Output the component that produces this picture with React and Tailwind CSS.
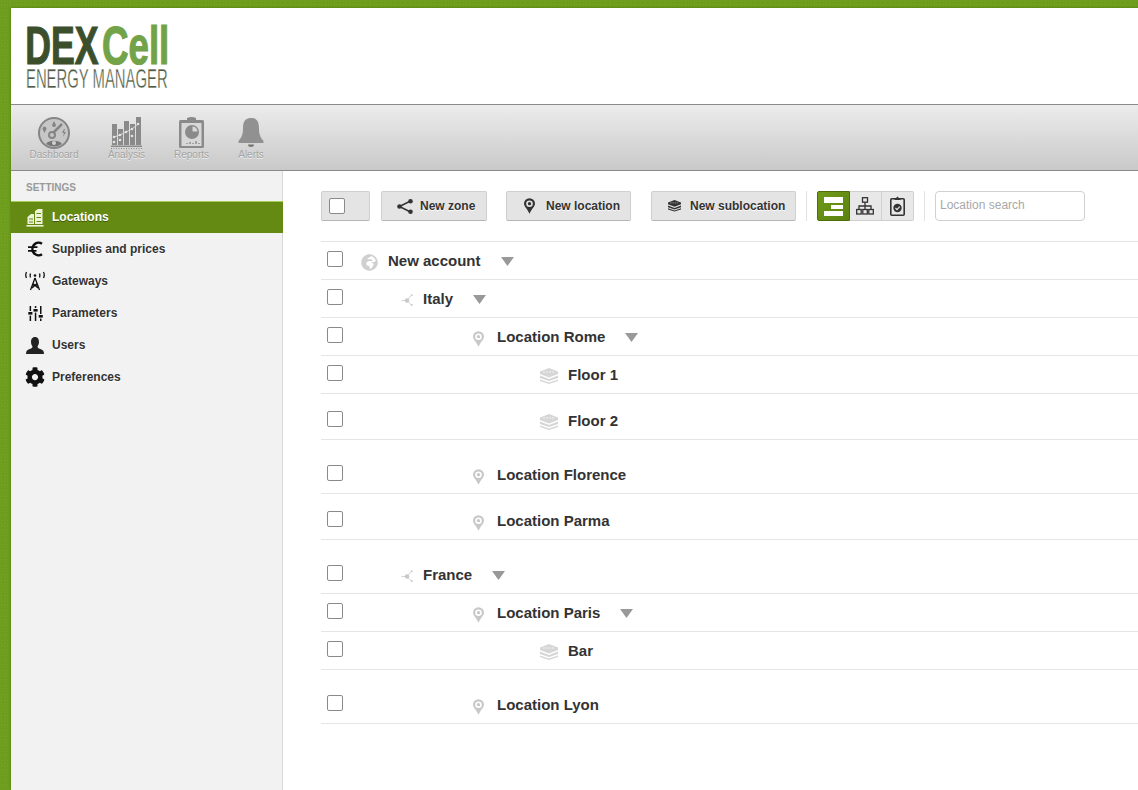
import React from 'react';
import { FaCog, FaGlobeAfrica } from 'react-icons/fa';

const DashboardIcon = () => (
  <svg width="34" height="34" viewBox="0 0 34 34" fill="none">
    <circle cx="17" cy="17" r="15" stroke="#858585" strokeWidth="2" fill="#c6c6c6" />
    <path d="M25 8 L16 17" stroke="#858585" strokeWidth="2.5" />
    <circle cx="15" cy="19" r="3" stroke="#858585" strokeWidth="2" />
    <path d="M17 5 l-2 4 a2 2 0 0 0 4 0z" fill="#858585" />
    <path d="M6 14 a2 2 0 1 1 3 0 l-1.5 3z" fill="#858585" />
    <path d="M27 13 l-2 4 h2 l-1 4 3-5 h-2 l1-3z" fill="#858585" />
    <path d="M9 28 a9 6 0 0 1 16 0 a15 15 0 0 1-16 0z" fill="#777" />
    <circle cx="17" cy="27" r="2" fill="#d0d0d0" />
  </svg>
);

const AnalysisIcon = () => (
  <svg width="32" height="34" viewBox="0 0 32 34">
    <g fill="#8a8a8a">
      <rect x="1" y="8" width="5" height="21" />
      <rect x="7" y="13" width="5" height="16" />
      <rect x="13" y="5" width="5" height="24" />
      <rect x="19" y="8" width="5" height="21" />
      <rect x="25" y="1" width="5" height="28" />
      <rect x="0" y="29.5" width="31" height="1.5" />
    </g>
    <path d="M3 21 L9 19 L15 16 L21 13 L27 8" stroke="#d8d8d8" strokeWidth="1" fill="none" />
    <g fill="#e4e4e4">
      <circle cx="3" cy="21" r="1.3" />
      <circle cx="9" cy="19" r="1.3" />
      <circle cx="15" cy="16" r="1.3" />
      <circle cx="21" cy="13" r="1.3" />
      <circle cx="27" cy="8" r="1.3" />
      <circle cx="3" cy="26" r="1.3" />
      <circle cx="9" cy="24" r="1.3" />
      <circle cx="21" cy="20" r="1.3" />
    </g>
    <path d="M0 32.5 H31" stroke="#8a8a8a" strokeDasharray="1 1.5" />
  </svg>
);

const ReportsIcon = () => (
  <svg width="27" height="32" viewBox="0 0 27 32">
    <rect x="1" y="3" width="25" height="28" rx="1.5" fill="#8a8a8a" />
    <rect x="3.5" y="6" width="20" height="23" fill="#d8d8d8" />
    <path d="M9 1 Q13.5 -1 18 1 V3 h3 v2 H6 V3 h3z" fill="#8a8a8a" />
    <circle cx="14" cy="15" r="7" fill="#8a8a8a" />
    <path d="M14.5 9.5 v5 h5 a5.5 5.5 0 0 0-5-5z" fill="#d8d8d8" />
    <path d="M9 27 v-1 M12 27 v-2 M15 27 v-1 M18 27 v-3 M21 27 v-1" stroke="#8a8a8a" strokeWidth="1.4" />
  </svg>
);

const BellIcon = () => (
  <svg width="26" height="32" viewBox="0 0 26 32">
    <path
      d="M13 1 C20 1 21 6 21 12 C21 18 23 21 25.5 24 V26 H0.5 V24 C3 21 5 18 5 12 C5 6 6 1 13 1z"
      fill="#919191"
    />
    <path d="M10 27.5 h6 a3 2.5 0 0 1-6 0z" fill="#777" />
  </svg>
);

const BuildingsIcon = () => (
  <svg width="18" height="19" viewBox="0 0 18 19" fill="#eef3d8">
    <path d="M9 3 L12 1 H16.5 V16 H9z" />
    <path d="M1.5 9 L5 6 H8 V16 H1.5z" />
    <rect x="0.5" y="17" width="17" height="1.6" />
    <g fill="#648a13">
      <rect x="10.5" y="5" width="4.5" height="1" />
      <rect x="10.5" y="9" width="4.5" height="1" />
      <rect x="10.5" y="13" width="4.5" height="1" />
      <rect x="3" y="10.5" width="4" height="1" />
      <rect x="3" y="13.5" width="4" height="1" />
    </g>
  </svg>
);

const EuroIcon = () => (
  <svg width="16" height="16" viewBox="0 0 16 16" fill="none" stroke="#111" strokeWidth="2.5">
    <path d="M15 2.8 A6.2 6.2 0 1 0 15 13.2" />
    <path d="M1 6.2 H10.5 M1 9.8 H9.5" strokeWidth="1.7" />
  </svg>
);

const TowerIcon = () => (
  <svg width="20" height="20" viewBox="0 0 20 20" fill="none" stroke="#111" strokeWidth="1.3">
    <path d="M10 7 L5.5 19 M10 7 L14.5 19 M7.5 14 H12.5 M7 17 L12 12.5 M13 17 L8 12.5" />
    <circle cx="10" cy="4.5" r="1.3" fill="#111" stroke="none" />
    <path d="M1.5 1 Q0 4 1.5 7 M18.5 1 Q20 4 18.5 7 M5.5 2.5 Q4.8 4.5 5.5 6.5 M14.5 2.5 Q15.2 4.5 14.5 6.5" />
  </svg>
);

const SlidersIcon = () => (
  <svg width="15" height="15" viewBox="0 0 15 15" fill="#111">
    <rect x="1.6" y="0" width="1.5" height="5" />
    <rect x="0.3" y="6" width="4.1" height="2.6" />
    <rect x="1.6" y="9.6" width="1.5" height="5.4" />
    <rect x="6.8" y="0" width="1.5" height="2" />
    <rect x="5.5" y="3" width="4.1" height="2.6" />
    <rect x="6.8" y="6.6" width="1.5" height="8.4" />
    <rect x="12" y="0" width="1.5" height="8" />
    <rect x="10.7" y="9" width="4.1" height="2.6" />
    <rect x="12" y="12.6" width="1.5" height="2.4" />
  </svg>
);

const UserIcon = () => (
  <svg width="18" height="17" viewBox="0 0 18 17" fill="#222">
    <path d="M9 0 C12 0 13 2.5 13 5 C13 7 12 8.5 11.5 9.5 C11.5 11 13 11.5 15 12.2 C17 13 18 14 18 17 H0 C0 14 1 13 3 12.2 C5 11.5 6.5 11 6.5 9.5 C6 8.5 5 7 5 5 C5 2.5 6 0 9 0z" />
  </svg>
);

const PinIcon = ({ color = '#c8c8c8', hole = '#fff' }) => (
  <svg width="11" height="16" viewBox="0 0 12 17">
    <path d="M6 0 A6 6 0 0 1 12 6 C12 9 8 12 6 17 C4 12 0 9 0 6 A6 6 0 0 1 6 0z" fill={color} />
    <circle cx="6" cy="6" r="3.6" fill={hole} />
    <circle cx="6" cy="6" r="1.8" fill={color} />
  </svg>
);

const LayersIcon = ({ color = '#d6d6d6', gap = '#fff', size = 18 }) => (
  <svg width={size} height={(size * 16) / 18} viewBox="0 0 18 16">
    <path d="M9 0 L18 3.5 V6 L9 9.5 L0 6 V3.5z" fill={color} />
    <path d="M0 7.5 L9 11 L18 7.5 V10 L9 13 L0 10z" fill={color} />
    <path d="M0 11.5 L9 14.5 L18 11.5 V13 L9 16 L0 13z" fill={color} />
    <path d="M3 4 H15" stroke={gap} strokeWidth="0.7" strokeDasharray="2 1" />
  </svg>
);

// three nodes, the left one pulled out, as in the zone icon
const ZoneIcon = () => (
  <svg width="12" height="12" viewBox="0 0 12 12" fill="#c8c8c8" stroke="#c8c8c8">
    <path d="M0.5 6.5 H6 L10.8 1 M6 6.5 L10.8 11.5" strokeWidth="0.8" fill="none" />
    <circle cx="6" cy="6.5" r="2.2" stroke="none" />
    <circle cx="10.8" cy="1.2" r="0.9" stroke="none" />
    <circle cx="10.8" cy="11" r="0.9" stroke="none" />
  </svg>
);

const ShareIcon = () => (
  <svg width="16" height="15" viewBox="0 0 16 15" fill="#333" stroke="#333">
    <path d="M2.5 7.5 L13.5 2 M2.5 7.5 L13.5 13" strokeWidth="1.4" fill="none" />
    <circle cx="2.5" cy="7.5" r="2.3" stroke="none" />
    <circle cx="13.5" cy="2.3" r="2.3" stroke="none" />
    <circle cx="13.5" cy="12.7" r="2.3" stroke="none" />
  </svg>
);

const SitemapIcon = () => (
  <svg width="18" height="18" viewBox="0 0 18 18" fill="none" stroke="#333" strokeWidth="1.3">
    <rect x="6.5" y="0.7" width="5" height="4.5" />
    <rect x="0.7" y="12.5" width="4.5" height="4.5" />
    <rect x="6.8" y="12.5" width="4.5" height="4.5" />
    <rect x="12.8" y="12.5" width="4.5" height="4.5" />
    <path d="M9 5 V12.5 M3 12.5 V9 H15 V12.5" />
  </svg>
);

const ClipboardCheckIcon = () => (
  <svg width="15" height="20" viewBox="0 0 15 20">
    <rect x="0.8" y="2.8" width="13.4" height="16.4" rx="1" fill="none" stroke="#333" strokeWidth="1.6" />
    <path d="M4.5 4 V2 H6 L7.5 0.5 L9 2 H10.5 V4z" fill="#333" />
    <circle cx="7.5" cy="12" r="4.2" fill="#333" />
    <path d="M5.5 12 L7 13.6 L9.7 10.6" stroke="#e8e8e8" strokeWidth="1.2" fill="none" />
  </svg>
);

const Caret = () => (
  <svg width="13" height="9" viewBox="0 0 13 9" className="ml-5 shrink-0">
    <path d="M0 0 H13 L6.5 9z" fill="#999" />
  </svg>
);

const Checkbox = () => (
  <span className="block w-4 h-4 shrink-0 rounded-[2px] border border-[#8a8a8a] bg-white" />
);

const topItems = [
  { label: 'Dashboard', icon: <DashboardIcon />, width: 'w-[48px]', gap: '' },
  { label: 'Analysis', icon: <AnalysisIcon />, width: 'w-[37px]', gap: 'ml-[30px]' },
  { label: 'Reports', icon: <ReportsIcon />, width: 'w-[35px]', gap: 'ml-[29px]' },
  { label: 'Alerts', icon: <BellIcon />, width: 'w-[26px]', gap: 'ml-[29px]' },
];

const navItems = [
  { label: 'Locations', icon: <BuildingsIcon />, active: true },
  { label: 'Supplies and prices', icon: <EuroIcon /> },
  { label: 'Gateways', icon: <TowerIcon /> },
  { label: 'Parameters', icon: <SlidersIcon /> },
  { label: 'Users', icon: <UserIcon /> },
  { label: 'Preferences', icon: <FaCog className="text-[#111] text-[20px]" /> },
];

const levels = [
  { box: 'ml-[16px]', text: 'ml-[9px]', icon: <FaGlobeAfrica className="text-[#cfcfcf] text-[17px] mt-[3px]" /> },
  { box: 'ml-[54px]', text: 'ml-[6px]', icon: <div className="mt-[5px]"><ZoneIcon /></div> },
  { box: 'ml-[125px]', text: 'ml-[9px]', icon: <div className="mt-[4px] ml-[1px]"><PinIcon /></div> },
  { box: 'ml-[196px]', text: 'ml-[9px]', icon: <div className="mt-[3px]"><LayersIcon /></div> },
];

const rows = [
  { label: 'New account', level: 0, caret: true, height: 'h-[38px]', top: 'pt-[9px]' },
  { label: 'Italy', level: 1, caret: true, height: 'h-[38px]', top: 'pt-[9px]' },
  { label: 'Location Rome', level: 2, caret: true, height: 'h-[38px]', top: 'pt-[9px]' },
  { label: 'Floor 1', level: 3, height: 'h-[38px]', top: 'pt-[9px]' },
  { label: 'Floor 2', level: 3, height: 'h-[46px]', top: 'pt-[17px]' },
  { label: 'Location Florence', level: 2, height: 'h-[54px]', top: 'pt-[25px]' },
  { label: 'Location Parma', level: 2, height: 'h-[46px]', top: 'pt-[17px]' },
  { label: 'France', level: 1, caret: true, height: 'h-[54px]', top: 'pt-[25px]' },
  { label: 'Location Paris', level: 2, caret: true, height: 'h-[38px]', top: 'pt-[9px]' },
  { label: 'Bar', level: 3, height: 'h-[38px]', top: 'pt-[9px]' },
  { label: 'Location Lyon', level: 2, height: 'h-[54px]', top: 'pt-[25px]' },
];

const btn =
  'h-[30px] flex items-center rounded-[2px] border border-[#cfcfcf] border-b-[#b5b5b5] bg-[#e4e4e4] text-[12px] font-bold text-[#333] [text-shadow:0_1px_0_#fff]';

const App = () => {
  return (
    <div className="h-screen overflow-hidden bg-[#6f9e1f] bg-[radial-gradient(#74a323_1px,transparent_1px),radial-gradient(#6a991c_1px,transparent_1px)] bg-[length:3px_3px,5px_5px] pt-2 pl-[11px] font-['Liberation_Sans',Arial,sans-serif]">
      <div className="h-full flex flex-col bg-white shadow-[0_0_2px_#47690c]">
        <header className="h-[96px] shrink-0 pl-[15px] pt-[16px] bg-white">
          <svg width="142" height="70" viewBox="0 0 142 70">
            <g transform="scale(0.66 1)">
              <text x="-1" y="39.5" fontFamily="Liberation Sans" fontWeight="700" fontSize="54" fill="#3c4f2c" stroke="#3c4f2c" strokeWidth="1.2">DEX</text>
            </g>
            <g transform="translate(76 0) scale(0.68 1)">
              <text x="0" y="39.5" fontFamily="Liberation Sans" fontWeight="700" fontSize="54" fill="#72a348" stroke="#72a348" strokeWidth="1.2">Cell</text>
            </g>
            <g transform="scale(0.6 1)">
              <text x="0" y="64" fontFamily="Liberation Sans" fontSize="27" fill="#4f5b45" stroke="#fff" strokeWidth="0.4" textLength="236" lengthAdjust="spacingAndGlyphs">ENERGY MANAGER</text>
            </g>
          </svg>
        </header>

        <nav className="h-[67px] shrink-0 flex pl-[19px] pt-[11px] border-y border-[#8a8a8a] bg-gradient-to-b from-[#ececec] to-[#c9c9c9]">
          {topItems.map((item) => (
            <div key={item.label} className={`${item.gap} ${item.width} flex flex-col items-center`}>
              <div className="h-[33px] flex items-center justify-center">{item.icon}</div>
              <span className="text-[10px] leading-[12px] whitespace-nowrap text-[#a3a3a3] [text-shadow:0_1px_0_#eee]">
                {item.label}
              </span>
            </div>
          ))}
        </nav>

        <div className="flex-1 flex min-h-0">
          <aside className="w-[272px] shrink-0 bg-[#f2f2f2] border-r border-[#d8d8d8]">
            <div className="h-[30px] pl-[15px] pt-[11px] text-[10px] leading-[12px] font-bold text-[#999]">SETTINGS</div>
            <ul>
              {navItems.map((item) => (
                <li
                  key={item.label}
                  className={
                    item.active
                      ? 'h-[32px] pb-[1px] -mr-px flex items-center bg-[#648a13] border-t border-[#a0cc55] text-white text-[12px] font-bold [text-shadow:0_1px_0_#3f5a08]'
                      : 'h-[32px] flex items-center text-[#333] text-[12px] font-bold [text-shadow:0_1px_0_#fff]'
                  }
                >
                  <span className="w-[20px] ml-[14px] mr-[7px] flex items-center justify-center">{item.icon}</span>
                  {item.label}
                </li>
              ))}
            </ul>
          </aside>

          <main className="flex-1 min-w-0 pl-[38px] pt-[20px]">
            <div className="flex items-start">
              <div className={`${btn} w-[49px] pl-[7px]`}>
                <Checkbox />
              </div>
              <button className={`${btn} ml-[11px] w-[106px] pl-[15px]`}>
                <span className="mr-[7px] flex"><ShareIcon /></span>
                New zone
              </button>
              <button className={`${btn} ml-[19px] w-[125px] pl-[17px]`}>
                <span className="mr-[11px] flex"><PinIcon color="#333" hole="#e4e4e4" /></span>
                New location
              </button>
              <button className={`${btn} ml-[20px] w-[145px] pl-[16px]`}>
                <span className="mr-[9px] flex"><LayersIcon color="#333" gap="#e4e4e4" size={13} /></span>
                New sublocation
              </button>
              <div className="w-px h-[30px] bg-[#e2e2e2] ml-[10px]" />
              <div className="ml-[10px] flex h-[30px]">
                <div className="w-[33px] flex flex-col justify-center gap-[2px] items-end pr-[6px] bg-gradient-to-br from-[#6f9a18] to-[#5c8210] border border-[#4e6e0c] rounded-l-[2px]">
                  <span className="block w-[19px] h-[6px] bg-white" />
                  <span className="block w-[12px] h-[4px] bg-white" />
                  <span className="block w-[19px] h-[5px] bg-white" />
                </div>
                <div className="w-[32px] pr-[2px] flex items-center justify-center bg-[#e8e8e8] border-y border-r border-[#cfcfcf]">
                  <SitemapIcon />
                </div>
                <div className="w-[32px] flex items-center justify-center bg-[#e8e8e8] border-y border-r border-[#cfcfcf] rounded-r-[2px]">
                  <ClipboardCheckIcon />
                </div>
              </div>
              <div className="w-px h-[30px] bg-[#e2e2e2] ml-[10px]" />
              <input
                className="ml-[10px] w-[150px] h-[30px] rounded-[4px] border border-[#d0d0d0] px-[4px] pb-[2px] text-[12px] outline-none placeholder:text-[#a8a8a8]"
                placeholder="Location search"
              />
            </div>

            <div className="mt-[20px] border-t border-[#e5e5e5]">
              {rows.map((row) => {
                const lvl = levels[row.level];
                return (
                  <div key={row.label} className={`${row.height} ${row.top} flex items-start pl-[6px] border-b border-[#e5e5e5] box-border`}>
                    <Checkbox />
                    <div className={`${lvl.box} w-5 h-[20px] flex justify-center shrink-0`}>{lvl.icon}</div>
                    <span className={`${lvl.text} text-[15px] leading-[20px] font-bold text-[#333] whitespace-nowrap`}>{row.label}</span>
                    {row.caret && <div className="h-[20px] flex items-center"><Caret /></div>}
                  </div>
                );
              })}
            </div>
          </main>
        </div>
      </div>
    </div>
  );
};

export default App;
